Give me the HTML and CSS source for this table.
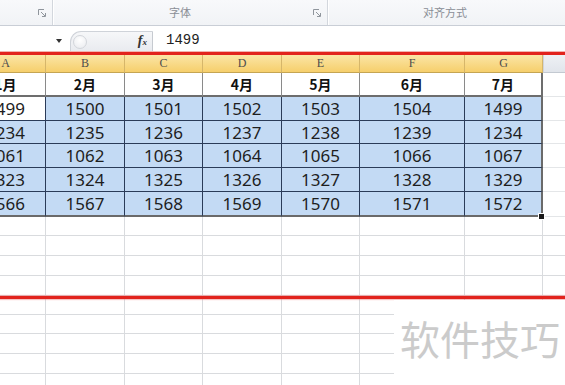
FILE: index.html
```html
<!DOCTYPE html>
<html lang="zh">
<head>
<meta charset="utf-8">
<title>Sheet</title>
<link rel="stylesheet" href="styles.css">
</head>
<body>
<div class="app">
  <div class="ribbon">
    <div class="grp">
      <span class="lbl"></span>
      <span class="launch"><svg width="8" height="8" viewBox="0 0 8 8"><path d="M0.5 6V0.5H6" fill="none" stroke="#8f959c"/><path d="M3 3L7 7M7.5 4V7.5H4" fill="none" stroke="#8f959c"/></svg></span>
    </div>
    <div class="sep"></div>
    <div class="grp">
      <span class="lbl">字体</span>
      <span class="launch"><svg width="8" height="8" viewBox="0 0 8 8"><path d="M0.5 6V0.5H6" fill="none" stroke="#8f959c"/><path d="M3 3L7 7M7.5 4V7.5H4" fill="none" stroke="#8f959c"/></svg></span>
    </div>
    <div class="sep"></div>
    <div class="grp last">
      <span class="lbl">对齐方式</span>
    </div>
  </div>

  <div class="fbar">
    <div class="namebox"><span class="dd"></span></div>
    <div class="pill"><span class="knob"></span><span class="fx">f<span class="fxs">x</span></span></div>
    <div class="finput">1499</div>
  </div>

  <div class="redline"></div>

  <div class="sheet">
    <div class="row hdr">
      <div class="c">A</div><div class="c">B</div><div class="c">C</div><div class="c">D</div><div class="c">E</div><div class="c">F</div><div class="c">G</div><div class="c h"></div>
    </div>
    <div class="row mon">
      <div class="c">1月</div><div class="c">2月</div><div class="c">3月</div><div class="c">4月</div><div class="c">5月</div><div class="c">6月</div><div class="c g">7月</div><div class="c h"></div>
    </div>
    <div class="row dat r24">
      <div class="c act">1499</div><div class="c">1500</div><div class="c">1501</div><div class="c">1502</div><div class="c">1503</div><div class="c">1504</div><div class="c g">1499</div><div class="c h"></div>
    </div>
    <div class="row dat r23">
      <div class="c">1234</div><div class="c">1235</div><div class="c">1236</div><div class="c">1237</div><div class="c">1238</div><div class="c">1239</div><div class="c g">1234</div><div class="c h"></div>
    </div>
    <div class="row dat r24">
      <div class="c">1061</div><div class="c">1062</div><div class="c">1063</div><div class="c">1064</div><div class="c">1065</div><div class="c">1066</div><div class="c g">1067</div><div class="c h"></div>
    </div>
    <div class="row dat r24">
      <div class="c">1323</div><div class="c">1324</div><div class="c">1325</div><div class="c">1326</div><div class="c">1327</div><div class="c">1328</div><div class="c g">1329</div><div class="c h"></div>
    </div>
    <div class="row dat lastdat">
      <div class="c">1566</div><div class="c">1567</div><div class="c">1568</div><div class="c">1569</div><div class="c">1570</div><div class="c">1571</div><div class="c g">1572</div><div class="c h"></div>
    </div>
    <div class="row emp e19"><div class="c"></div><div class="c"></div><div class="c"></div><div class="c"></div><div class="c"></div><div class="c"></div><div class="c"></div><div class="c h"></div></div>
    <div class="row emp e20"><div class="c"></div><div class="c"></div><div class="c"></div><div class="c"></div><div class="c"></div><div class="c"></div><div class="c"></div><div class="c h"></div></div>
    <div class="row emp e20"><div class="c"></div><div class="c"></div><div class="c"></div><div class="c"></div><div class="c"></div><div class="c"></div><div class="c"></div><div class="c h"></div></div>
    <div class="row emp e20"><div class="c"></div><div class="c"></div><div class="c"></div><div class="c"></div><div class="c"></div><div class="c"></div><div class="c"></div><div class="c h"></div></div>
    <div class="row emp e19"><div class="c"></div><div class="c"></div><div class="c"></div><div class="c"></div><div class="c"></div><div class="c"></div><div class="c"></div><div class="c h"></div></div>
    <div class="row emp e19"><div class="c"></div><div class="c"></div><div class="c"></div><div class="c"></div><div class="c"></div><div class="c"></div><div class="c"></div><div class="c h"></div></div>
    <div class="row emp e20"><div class="c"></div><div class="c"></div><div class="c"></div><div class="c"></div><div class="c"></div><div class="c"></div><div class="c"></div><div class="c h"></div></div>
    <div class="row emp e20"><div class="c"></div><div class="c"></div><div class="c"></div><div class="c"></div><div class="c"></div><div class="c"></div><div class="c"></div><div class="c h"></div></div>
    <div class="row emp e20"><div class="c"></div><div class="c"></div><div class="c"></div><div class="c"></div><div class="c"></div><div class="c"></div><div class="c"></div><div class="c h"></div></div>
  </div>

  <div class="fill-handle"></div>
  <div class="redline2"></div>
  <div class="wm">软件技巧</div>
</div>
</body>
</html>
```

FILE: styles.css
```css
* { box-sizing: border-box; }
html, body { margin: 0; padding: 0; background: #fff; }
.app {
  position: relative;
  width: 565px;
  height: 385px;
  overflow: hidden;
  font-family: "Noto Sans", "Noto Sans CJK SC", sans-serif;
}

/* ribbon */
.ribbon {
  display: grid;
  grid-template-columns: 52px 1px 274px 1px 1fr;
  height: 26px;
  background: linear-gradient(#f8f9fb, #f1f3f6);
  border-bottom: 1px solid #c9ced6;
}
.grp {
  display: grid;
  grid-template-columns: 1fr 20px;
  align-items: center;
}
.grp.last { grid-template-columns: 1fr 3px; }
.lbl {
  text-align: center;
  font-family: "Noto Sans CJK SC", sans-serif;
  font-size: 11px;
  color: #8a8e96;
  line-height: 25px;
}
.launch { display: flex; justify-content: center; align-items: center; padding-top: 1px; }
.sep { background: #d3d7dd; box-shadow: 1px 0 0 #ffffff; }

/* formula bar */
.fbar {
  display: flex;
  height: 25px;
  background: #fff;
  align-items: flex-end;
}
.namebox {
  width: 66px;
  height: 25px;
  display: flex;
  justify-content: flex-end;
  align-items: center;
  padding-right: 4px;
  padding-top: 5px;
}
.dd {
  width: 0; height: 0;
  border-left: 3px solid transparent;
  border-right: 3px solid transparent;
  border-top: 4px solid #333;
}
.pill {
  margin-left: 4px;
  width: 83px;
  height: 20px;
  background: linear-gradient(#f6f7f9, #e9ebef);
  border: 1px solid #cfd3d9;
  border-right: 1px solid #c6cad0;
  border-bottom: none;
  border-radius: 11px 0 0 0;
  display: flex;
  justify-content: space-between;
  align-items: center;
  padding: 0 5px 0 2px;
}
.knob {
  width: 14px; height: 14px;
  border-radius: 50%;
  border: 1px solid #d3d6db;
  background: radial-gradient(circle at 50% 35%, #ffffff, #e8eaee);
}
.fx {
  font-family: "Liberation Serif", serif;
  font-style: italic;
  font-weight: bold;
  font-size: 14px;
  color: #333;
  line-height: 14px;
}
.fxs { font-size: 9px; }
.finput {
  flex: 1;
  height: 20px;
  padding-left: 13px;
  font-family: "Liberation Mono", monospace;
  font-size: 14px;
  line-height: 19px;
  color: #222;
}

.redline {
  height: 4px;
  background: #e2231d;
  border-top: 1px solid #f2b3b0;
}

/* sheet */
.sheet { margin-left: -34px; width: 599px; }
.row {
  display: grid;
  grid-template-columns: 80px 79px 78px 79px 78px 105px 78px 1fr;
}
.c {
  border-right: 1px solid #d9dbde;
  border-bottom: 1px solid #d9dbde;
  display: flex;
  align-items: center;
  justify-content: center;
  overflow: hidden;
  white-space: nowrap;
}
.c.h { border-right: none; }

.hdr { height: 18px; }
.hdr .c {
  background: linear-gradient(#fbe5a6, #f6cf6c);
  border-right-color: #d6b66a;
  border-bottom-color: #c5a553;
  font-family: "Liberation Serif", serif;
  font-size: 12px;
  color: #4d4d4d;
}
.hdr .c.h {
  background: linear-gradient(#eef1f5, #e1e5eb);
  border-bottom-color: #c3c9d1;
  border-left: 1px solid #d0d4da;
}

.mon { height: 24px; }
.mon .c {
  border-right-color: #8a8a8a;
  border-bottom: 2px solid #6d6d6d;
  font-family: "Noto Sans CJK SC", sans-serif;
  font-weight: bold;
  font-size: 14px;
  color: #111;
}
.mon .c.g { border-right: 2px solid #6d6d6d; }
.mon .c.h { border-bottom: 1px solid #e4e6e8; }

.dat .c {
  background: #c3daf4;
  border-right-color: #2a3b58;
  border-bottom-color: #2a3b58;
  font-family: "Noto Sans", sans-serif;
  font-size: 17px;
  color: #1e1e1e;
}
.dat .c.act { background: #fff; }
.dat .c.g { border-right: 2px solid #6a6a6a; }
.dat .c.h { background: #fff; border-bottom-color: #e4e6e8; }
.r24 { height: 24px; }
.r23 { height: 23px; }
.lastdat { height: 25px; }
.lastdat .c { border-bottom: 2px solid #6a6a6a; }
.lastdat .c.h { border-bottom: 1px solid #e4e6e8; }

.e19 { height: 19px; }
.e20 { height: 20px; }

/* overlays */
.fill-handle {
  position: absolute;
  left: 538px;
  top: 213px;
  width: 7px;
  height: 7px;
  background: #1a1a1a;
  border: 1px solid #fff;
}
.redline2 {
  position: absolute;
  left: 0;
  right: 0;
  top: 296px;
  height: 3px;
  background: #e2231d;
  box-shadow: 0 0 1px 1px rgba(240, 120, 120, 0.45);
}
.wm {
  position: absolute;
  left: 394px;
  top: 300px;
  right: 0;
  bottom: 0;
  background: #fff;
  padding: 18px 0 0 6px;
  font-family: "Noto Sans CJK SC", sans-serif;
  font-size: 40px;
  line-height: 40px;
  color: #cbcbcb;
  letter-spacing: 0;
}
```
